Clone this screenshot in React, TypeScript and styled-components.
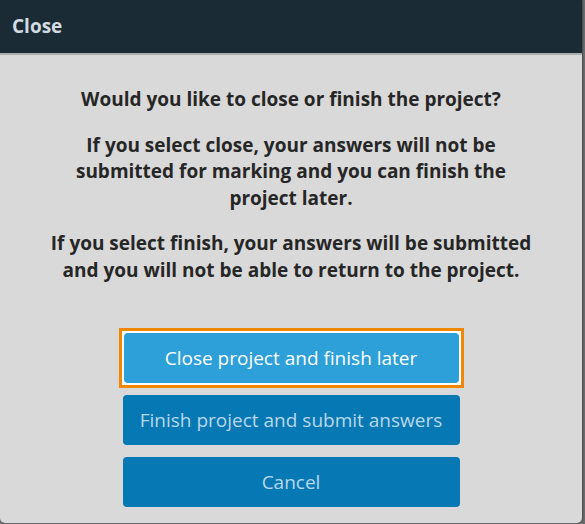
import React from "react";
import styled, { createGlobalStyle } from "styled-components";

const Global = createGlobalStyle`
  html, body { margin: 0; padding: 0; }
  body {
    background: #6a6e70;
    font-family: "Open Sans", "Noto Sans", sans-serif;
    width: 585px;
    height: 524px;
    overflow: hidden;
  }
`;

const Dialog = styled.div`
  width: 582px;
  height: 523px;
  background: #d9d9d9;
  border-radius: 0 0 5px 5px;
  display: flex;
  flex-direction: column;
  overflow: hidden;
  box-shadow: 1px 0 2px rgba(0, 0, 0, 0.35);
`;

const Header = styled.div`
  height: 55px;
  background: #1a2b36;
  border-bottom: 2px solid #a9adb0;
  display: flex;
  align-items: center;
  padding: 0 12px;
  box-sizing: border-box;
`;

const Title = styled.h1`
  margin: 0;
  font-size: 19px;
  font-weight: 700;
  color: #d3dbe0;
  line-height: 1;
`;

const Body = styled.div`
  display: flex;
  flex-direction: column;
  align-items: center;
  padding: 31px 40px 0;
`;

const Text = styled.div`
  max-width: 482px;
  display: flex;
  flex-direction: column;
  gap: 19px;
`;

const Message = styled.p`
  margin: 0;
  text-align: center;
  font-size: 19px;
  font-weight: 700;
  line-height: 26.5px;
  color: #262626;
`;

const Actions = styled.div`
  display: flex;
  flex-direction: column;
  gap: 12px;
  margin-top: 49px;
  width: 337px;
`;

const FocusFrame = styled.div`
  margin: -4px -4px -5px;
  border: 3px solid #f28800;
  padding: 2px;
  background: #ffffff;
  display: flex;
`;

const Button = styled.button<{ $light?: boolean }>`
  height: 50px;
  width: 100%;
  border: none;
  border-radius: 4px;
  font-family: "Open Sans", "Noto Sans", sans-serif;
  font-size: 19px;
  font-weight: 400;
  background: ${(p) => (p.$light ? "#2d9fd9" : "#0678b4")};
  color: ${(p) => (p.$light ? "#ffffff" : "#b9d7ea")};
  cursor: pointer;
  outline: none;
`;

export default function App() {
  return (
    <>
      <Global />
      <Dialog>
        <Header>
          <Title>Close</Title>
        </Header>
        <Body>
          <Text>
            <Message>Would you like to close or finish the project?</Message>
            <Message>
              If you select close, your answers will not be submitted for
              marking and you can finish the project later.
            </Message>
            <Message>
              If you select finish, your answers will be submitted and you will
              not be able to return to the project.
            </Message>
          </Text>
          <Actions>
            <FocusFrame>
              <Button $light>Close project and finish later</Button>
            </FocusFrame>
            <Button>Finish project and submit answers</Button>
            <Button>Cancel</Button>
          </Actions>
        </Body>
      </Dialog>
    </>
  );
}
